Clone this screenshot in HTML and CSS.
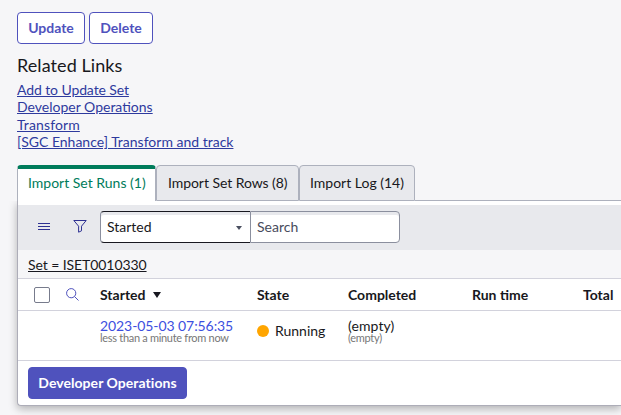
FILE: index.html
```html
<!DOCTYPE html>
<html lang="en">
<head>
<meta charset="utf-8">
<title>Import Set</title>
<link rel="stylesheet" href="styles.css">
</head>
<body>
<main class="page">
  <div class="actions">
    <button class="btn update">Update</button>
    <button class="btn delete">Delete</button>
  </div>
  <h2 class="heading">Related Links</h2>
  <ul class="links">
    <li><a class="wide" href="#">Add to Update Set</a></li>
    <li><a href="#">Developer Operations</a></li>
    <li><a class="wide" href="#">Transform</a></li>
    <li><a href="#">[SGC Enhance] Transform and track</a></li>
  </ul>
  <nav class="tabs">
    <span class="tab active">Import Set Runs (1)</span>
    <span class="tab rows">Import Set Rows (8)</span>
    <span class="tab log">Import Log (14)</span>
    <span class="tab-rest"></span>
  </nav>
  <section class="panel">
    <div class="toolbar">
      <svg class="menu" width="12" height="10" viewBox="0 0 12 10"><path d="M0 1.5h12M0 4.5h12M0 7.5h12"/></svg>
      <svg class="funnel" width="14" height="14" viewBox="0 0 14 14"><path d="M.8 1.5h12.4L8.5 7.2v4.6L5.6 13.2V7.2z"/></svg>
      <div class="select">Started<i class="caret"></i></div>
      <div class="search">Search</div>
    </div>
    <div class="filter"><a href="#">Set = ISET0010330</a></div>
    <div class="grid head">
      <span class="tools"><i class="check"></i><svg class="lens" width="13" height="13" viewBox="0 0 13 13"><circle cx="5.2" cy="5.2" r="4.6"/><path d="M8.5 8.5l4 4"/></svg></span>
      <span>Started<i class="sort"></i></span>
      <span>State</span>
      <span>Completed</span>
      <span>Run time</span>
      <span>Total</span>
    </div>
    <div class="grid row">
      <span></span>
      <div class="cell"><a class="date" href="#">2023-05-03 07:56:35</a><small>less than a minute from now</small></div>
      <div class="state"><i class="dot"></i>Running</div>
      <div class="cell"><span class="value">(empty)</span><small>(empty)</small></div>
    </div>
    <div class="footer"><button class="btn primary">Developer Operations</button></div>
  </section>
</main>
</body>
</html>
```
FILE: styles.css
```css
* { box-sizing: border-box; }
body {
  margin: 0;
  height: 415px;
  overflow: hidden;
  background: #f6f6f8;
  color: #181820;
  font: 14px/17px Lato, "Liberation Sans", sans-serif;
}
.page { padding: 12px 0 0 17px; }
.actions { display: flex; gap: 4px; }
.btn {
  height: 32px;
  padding: 0;
  border: 1px solid #4f52bd;
  border-radius: 4px;
  background: #fff;
  color: #4f52bd;
  font: bold 14px/30px Lato, "Liberation Sans", sans-serif;
}
.update { width: 68px; }
.delete { width: 64px; }
.heading { margin: 10px 0 5px; font-size: 18px; line-height: 22px; font-weight: 400; letter-spacing: .08px; }
.links { height: 84px; margin: 0; padding: 0; list-style: none; }
.links li { height: 17px; }
.links li:nth-child(2) { height: 18px; }
.links a { color: #2e3a9e; }
.links .wide { letter-spacing: -.1px; }
.links li:nth-child(3) .wide { letter-spacing: .12px; }
.tabs { display: flex; height: 36px; line-height: 33px; }
.tab {
  flex: none;
  padding-left: 10px;
  border: 1px solid #adb1bd;
  border-radius: 4px 4px 0 0;
  background: #e8e9ed;
  white-space: nowrap;
}
.active {
  width: 139px;
  border-top: 4px solid #007c5b;
  border-bottom: 0;
  background: #fff;
  color: #007c5b;
  line-height: 27px;
}
.rows { width: 143px; padding-left: 11px; letter-spacing: -.06px; }
.log { width: 116px; }
.tab-rest { flex: 1; border-bottom: 1px solid #adb1bd; }
.panel {
  height: 205px;
  padding-top: 4px;
  border: 1px solid #adadb8;
  border-top: 0;
  border-right: 0;
  border-radius: 0 0 0 4px;
  background: #fff;
  box-shadow: 0 3px 8px rgba(0, 0, 0, .28);
  clip-path: inset(0 0 -12px -12px);
}
.toolbar { display: flex; height: 45px; padding: 6px 0 0 20px; background: #e8e9ed; }
svg { fill: none; stroke: #2e3192; }
.menu { margin: 11px 23px 0 0; }
.funnel { margin: 8px 13px 0 0; }
.select, .search {
  height: 32px;
  border: 1px solid #181820;
  border-left-color: #8b8f9e;
  background: #fff;
  box-shadow: inset 0 3px #e8e9ed;
  line-height: 30px;
  padding-left: 6px;
}
.select {
  display: flex;
  width: 150px;
  justify-content: space-between;
  border-right: 0;
  border-radius: 4px 0 0 4px;
}
.caret {
  width: 0;
  height: 0;
  margin: 14px 8px 0 0;
  border: 3px solid transparent;
  border-top: 4px solid #4a4f60;
  border-bottom: 0;
}
.search {
  width: 150px;
  border-color: #8b8f9e;
  border-radius: 0 4px 4px 0;
  color: #484b5c;
}
.filter { height: 29px; padding: 6px 0 0 10px; border-bottom: 1px solid #d2d2dc; background: #f6f6f8; letter-spacing: -.08px; }
.filter a { color: #181820; }
.grid {
  display: grid;
  grid-template-columns: 82px 157px 91px 124px 111px 1fr;
  border-bottom: 1px solid #d2d2dc;
}
.head { height: 32px; line-height: 32px; font-weight: bold; }
.tools { display: flex; }
.check { width: 16px; height: 16px; margin: 8px 16px 0; border: 1px solid #777b8c; border-radius: 2px; }
.lens { margin-top: 9px; stroke: #4f52bd; }
.sort {
  display: inline-block;
  margin: 0 0 2px 8px;
  border: 4.5px solid transparent;
  border-top: 6px solid #181820;
  border-bottom: 0;
}
.row { height: 50px; }
.cell { display: flex; flex-direction: column; padding-top: 8px; line-height: 13px; }
.cell small { color: #777; font-size: 11px; line-height: 11px; letter-spacing: -.3px; }
.date { color: #3c4fe0; text-decoration: none; letter-spacing: -.08px; }
.value { letter-spacing: .1px; }
.state { display: flex; gap: 6px; padding-top: 11px; }
.dot { width: 12px; height: 12px; margin-top: 3px; border-radius: 50%; background: #ffa500; }
.footer { padding: 6px 10px; }
.primary { width: 159px; background: #4f52bd; color: #fff; letter-spacing: .05px; }
```
